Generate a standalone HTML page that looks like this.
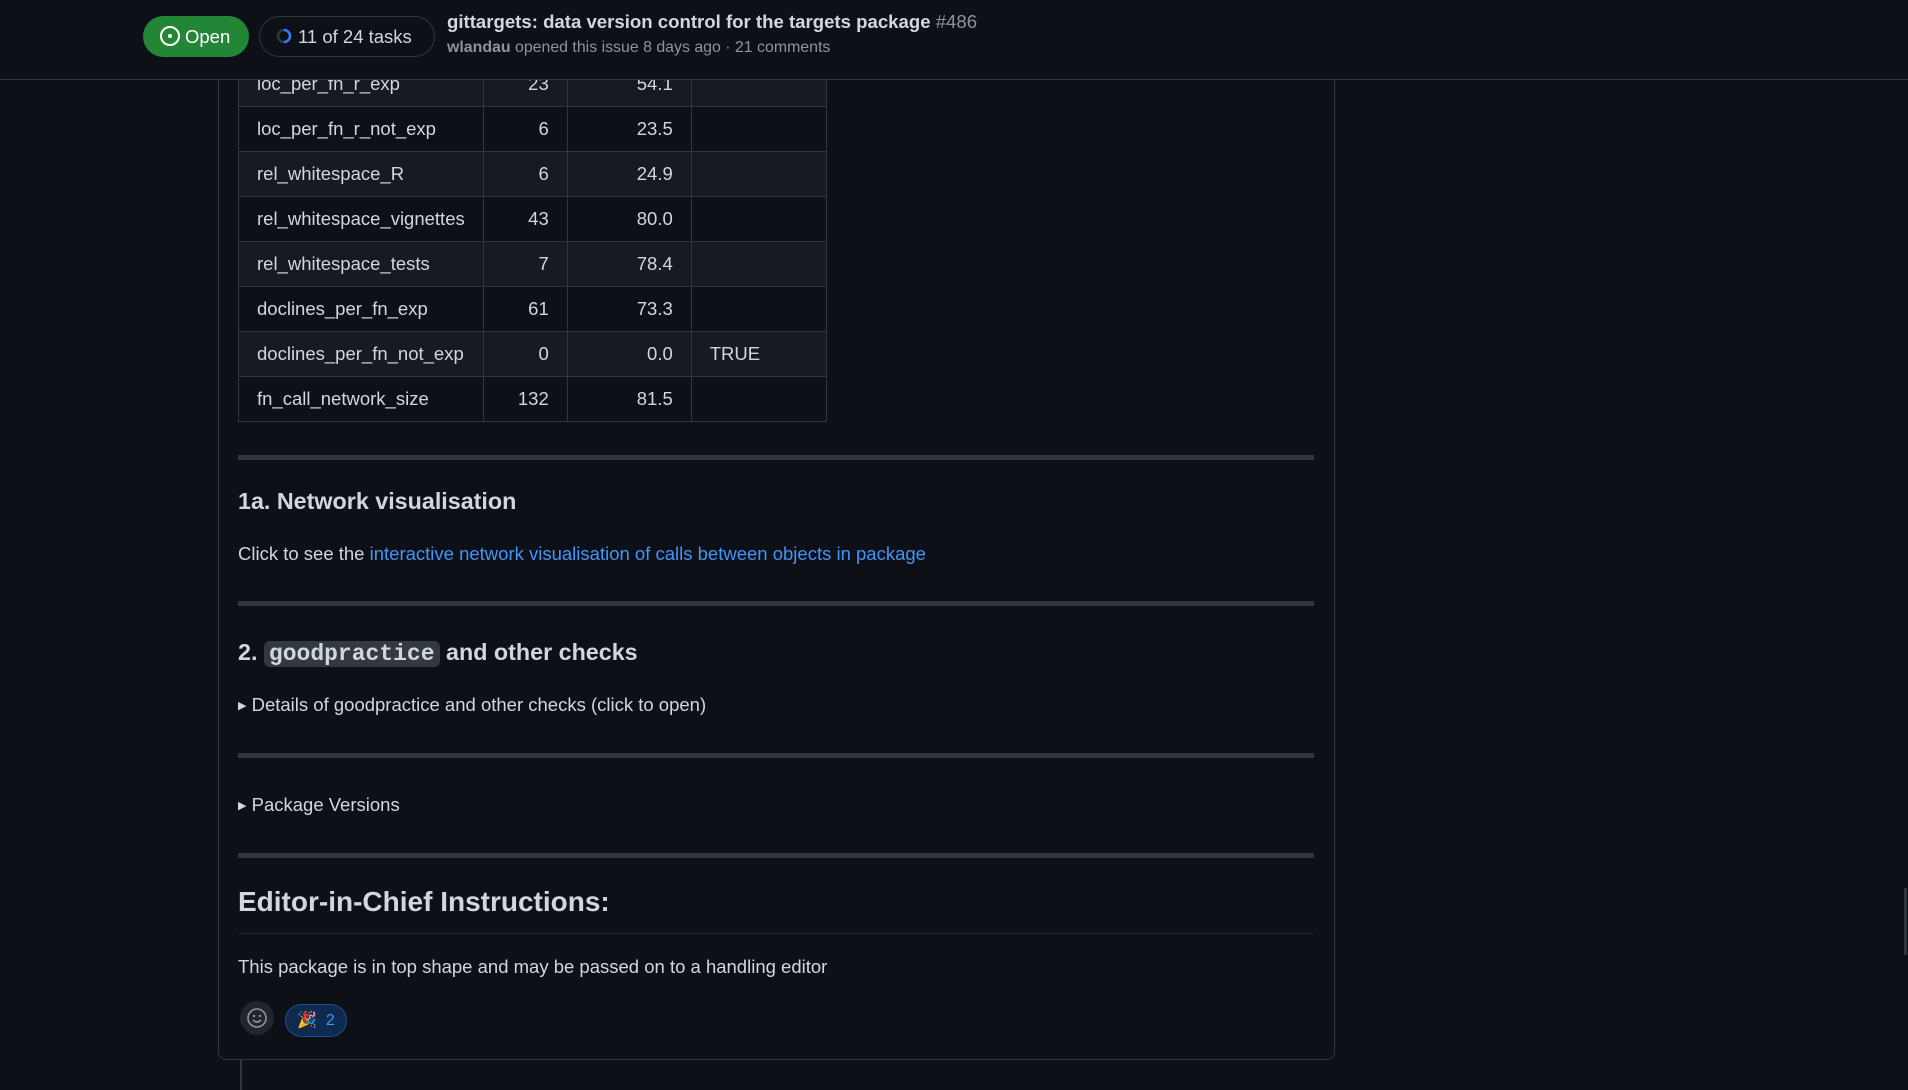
<!DOCTYPE html>
<html><head><meta charset="utf-8"><style>
*{box-sizing:border-box;margin:0;padding:0}
body{width:1908px;height:1080px;background:#0d1117;color:#d1d7e0;font-family:"Liberation Sans",sans-serif;overflow:hidden;position:relative}
.a{position:absolute;white-space:nowrap}
.box{position:absolute;left:218px;top:40px;width:1117px;height:1020px;border:1px solid #30363d;border-radius:8px}
.tl{position:absolute;left:240px;top:1060px;width:2px;height:30px;background:#30363d}
table{position:absolute;left:238px;top:61px;border-collapse:collapse;font-size:18.5px;color:#d1d7e0}
td{border:1px solid #30363d;height:45px;padding:0 18px}
td.n{text-align:right}
tr:nth-child(odd) td{background:#161b22}
tr:nth-child(even) td{background:#0d1117}
.hr{position:absolute;left:238px;width:1076px;height:5px;background:#30363d}
.hdr{position:absolute;left:0;top:0;width:1908px;height:80px;background:#0d1117;border-bottom:1px solid #30363d}
.t{font-size:18.5px}
</style></head><body>
<div class="box"></div>
<div class="tl"></div>
<table>
<tr><td style="width:244px">loc_per_fn_r_exp</td><td class="n" style="width:84px">23</td><td class="n" style="width:124px">54.1</td><td style="width:135px"></td></tr>
<tr><td>loc_per_fn_r_not_exp</td><td class="n">6</td><td class="n">23.5</td><td></td></tr>
<tr><td>rel_whitespace_R</td><td class="n">6</td><td class="n">24.9</td><td></td></tr>
<tr><td>rel_whitespace_vignettes</td><td class="n">43</td><td class="n">80.0</td><td></td></tr>
<tr><td>rel_whitespace_tests</td><td class="n">7</td><td class="n">78.4</td><td></td></tr>
<tr><td>doclines_per_fn_exp</td><td class="n">61</td><td class="n">73.3</td><td></td></tr>
<tr><td>doclines_per_fn_not_exp</td><td class="n">0</td><td class="n">0.0</td><td>TRUE</td></tr>
<tr><td>fn_call_network_size</td><td class="n">132</td><td class="n">81.5</td><td></td></tr>
</table>
<div class="hdr"></div>
<div class="a" style="left:143px;top:16px;width:106px;height:41px;border-radius:21px;background:#238636;color:#fff;font-size:18.5px;line-height:41px;padding-left:42px">Open</div>
<svg class="a" style="left:159px;top:25px" width="22" height="22" viewBox="0 0 22 22"><circle cx="11" cy="11" r="9" fill="none" stroke="#fff" stroke-width="2"/><circle cx="11" cy="11" r="2" fill="#fff"/></svg>
<div class="a" style="left:259px;top:16px;width:176px;height:41px;border-radius:21px;border:1px solid #30363d;color:#d1d7e0;font-size:18.5px;line-height:39px;padding-left:38px">11 of 24 tasks</div>
<svg class="a" style="left:276px;top:28px" width="16" height="16" viewBox="0 0 16 16"><circle cx="8" cy="8" r="6" fill="none" stroke="#30363d" stroke-width="2.5"/><path d="M8 2 A6 6 0 0 1 8 14" fill="none" stroke="#2f81f7" stroke-width="2.5"/></svg>
<div class="a" style="left:447px;top:11px;font-size:18.6px;font-weight:bold;color:#d1d7e0">gittargets: data version control for the targets package <span style="font-weight:normal;color:#8b949e">#486</span></div>
<div class="a" style="left:447px;top:39px;font-size:15.9px;color:#8b949e"><b>wlandau</b> opened this issue 8 days ago · 21 comments</div>

<div class="hr" style="top:455px"></div>
<div class="a" style="left:238px;top:488px;font-size:23.3px;font-weight:bold">1a. Network visualisation</div>
<div class="a t" style="left:238px;top:543px">Click to see the <span style="color:#4493f8">interactive network visualisation of calls between objects in package</span></div>
<div class="hr" style="top:601px"></div>
<div class="a" style="left:238px;top:637px;font-size:23.3px;font-weight:bold;line-height:30px">2. <span style="font-family:'Liberation Mono',monospace;background:#343941;border-radius:6px;padding:0 5px;font-size:23px">goodpractice</span> and other checks</div>
<div class="a t" style="left:238px;top:694px"><span style="font-size:11px;vertical-align:2px">▶</span> Details of goodpractice and other checks (click to open)</div>
<div class="hr" style="top:753px"></div>
<div class="a t" style="left:238px;top:794px"><span style="font-size:11px;vertical-align:2px">▶</span> Package Versions</div>
<div class="hr" style="top:853px"></div>
<div class="a" style="left:238px;top:886px;font-size:28px;font-weight:bold">Editor-in-Chief Instructions:</div>
<div class="a" style="left:238px;top:933px;width:1076px;height:1px;background:#21262d"></div>
<div class="a t" style="left:238px;top:956px">This package is in top shape and may be passed on to a handling editor</div>
<div class="a" style="left:240px;top:1001px;width:34px;height:34px;border-radius:50%;background:#21262d"></div>
<svg class="a" style="left:246px;top:1007px" width="22" height="22" viewBox="0 0 22 22"><circle cx="11" cy="11" r="9" fill="none" stroke="#8b949e" stroke-width="1.6"/><circle cx="8" cy="9" r="1.2" fill="#8b949e"/><circle cx="14" cy="9" r="1.2" fill="#8b949e"/><path d="M7 13 Q11 17 15 13" fill="none" stroke="#8b949e" stroke-width="1.6"/></svg>
<div class="a" style="left:285px;top:1004px;width:62px;height:33px;border-radius:17px;background:#0f2a4f;border:1px solid #1f4f8f;color:#4493f8;font-size:16px;line-height:31px;padding-left:11px">🎉&nbsp; 2</div>
<div class="a" style="left:1904px;top:888px;width:3px;height:67px;background:#30363d"></div>
</body></html>
